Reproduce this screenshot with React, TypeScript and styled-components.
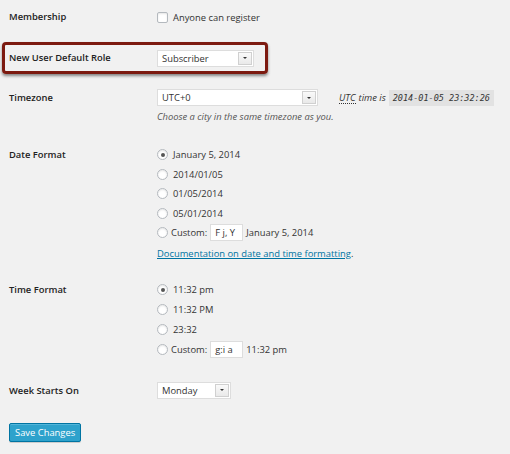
import React from 'react';
import styled, { createGlobalStyle } from 'styled-components';

const GlobalStyle = createGlobalStyle`
  html, body {
    margin: 0;
    padding: 0;
    background: #f1f1f1;
  }
  body {
    font-family: "Open Sans", "Liberation Sans", sans-serif;
    font-size: 9.4px;
    color: #222;
  }
`;

const Page = styled.div`
  width: 510px;
  height: 454px;
  overflow: hidden;
  padding-top: 10px;
  box-sizing: border-box;
`;

const Row = styled.div<{ $top?: number }>`
  display: flex;
  align-items: flex-start;
  margin-top: ${(p) => p.$top ?? 0}px;
  padding-left: 9px;
`;

const Highlight = styled.div<{ $top?: number }>`
  display: flex;
  align-items: center;
  margin-top: ${(p) => p.$top ?? 0}px;
  margin-left: 2px;
  width: 266px;
  height: 32px;
  box-sizing: border-box;
  padding-left: 4px;
  border: 3px solid #7c1a10;
  border-radius: 4px;
  box-shadow: 0 2px 3px rgba(0, 0, 0, 0.45);
`;

const Label = styled.div<{ $lh?: number }>`
  width: 148px;
  flex-shrink: 0;
  font-weight: 600;
  color: #222;
  line-height: ${(p) => p.$lh ?? 14}px;
`;

const Field = styled.div`
  display: flex;
  flex-direction: column;
  color: #333;
`;

const Line = styled.div<{ $h?: number; $gap?: number }>`
  display: flex;
  align-items: center;
  height: ${(p) => p.$h ?? 14}px;
  gap: ${(p) => p.$gap ?? 5}px;
  white-space: nowrap;
`;

const Checkbox = styled.span`
  width: 9px;
  height: 9px;
  border: 1px solid #b4b9be;
  border-radius: 2px;
  background: #fff;
  box-shadow: inset 0 1px 2px rgba(0, 0, 0, 0.1);
`;

const Radio = styled.span<{ $checked?: boolean }>`
  position: relative;
  width: 9px;
  height: 9px;
  border: 1px solid #b4b9be;
  border-radius: 50%;
  background: #fff;
  box-shadow: inset 0 1px 2px rgba(0, 0, 0, 0.1);
  flex-shrink: 0;

  &::after {
    content: '';
    display: ${(p) => (p.$checked ? 'block' : 'none')};
    position: absolute;
    left: 2.5px;
    top: 2.5px;
    width: 4px;
    height: 4px;
    border-radius: 50%;
    background: #555;
  }
`;

const Select = styled.div<{ $w: number }>`
  display: flex;
  align-items: center;
  justify-content: space-between;
  width: ${(p) => p.$w}px;
  height: 17px;
  box-sizing: border-box;
  background: #fff;
  border: 1px solid #ddd;
  padding: 0 1px 0 4px;
  color: #333;
`;

const Arrow = styled.span`
  width: 14px;
  height: 13px;
  box-sizing: border-box;
  border: 1px solid #d0d0d0;
  background: linear-gradient(#fafafa, #e9e9e9);
  display: flex;
  align-items: center;
  justify-content: center;

  &::after {
    content: '';
    border-left: 2px solid transparent;
    border-right: 2px solid transparent;
    border-top: 2px solid #333;
  }
`;

const TextInput = styled.span<{ $w: number }>`
  display: inline-flex;
  align-items: center;
  width: ${(p) => p.$w}px;
  height: 17px;
  box-sizing: border-box;
  padding-left: 4px;
  background: #fff;
  border: 1px solid #ddd;
  color: #333;
`;

const Help = styled.div`
  font-style: italic;
  color: #555;
  line-height: 14px;
  margin-top: 4px;
`;

const TimeInfo = styled.span`
  display: inline-flex;
  align-items: center;
  gap: 3px;
  margin-left: 21px;
  font-style: italic;
  color: #333;
`;

const Abbr = styled.span`
  border-bottom: 1px dotted #333;
  line-height: 11px;
`;

const Code = styled.code`
  font-family: "DejaVu Sans Mono", "Liberation Mono", monospace;
  font-style: italic;
  font-size: 8.5px;
  background: #e2e2e2;
  color: #333;
  padding: 2px 4px;
  line-height: 12px;
`;

const DocLine = styled.div`
  line-height: 14px;
  margin-top: 4px;
  white-space: nowrap;
`;

const DocLink = styled.a`
  color: #0074a2;
  text-decoration: underline;
`;

const SaveButton = styled.button<{ $top?: number }>`
  margin: ${(p) => p.$top ?? 0}px 0 0 9px;
  height: 19px;
  padding: 0 5px;
  font-family: "Open Sans", "Liberation Sans", sans-serif;
  font-size: 9.4px;
  color: #fff;
  background: #2ea2cc;
  border: 1px solid #0074a2;
  border-radius: 2px;
  box-shadow: inset 0 1px 0 rgba(120, 200, 230, 0.5), 0 1px 0 rgba(0, 0, 0, 0.15);
`;

const dateOptions = ['January 5, 2014', '2014/01/05', '01/05/2014', '05/01/2014'];
const timeOptions = ['11:32 pm', '11:32 PM', '23:32'];

const App: React.FC = () => {
  return (
    <>
      <GlobalStyle />
      <Page>
        <Row>
          <Label>Membership</Label>
          <Field>
            <Line>
              <Checkbox />
              Anyone can register
            </Line>
          </Field>
        </Row>

        <Highlight $top={18}>
          <Label>New User Default Role</Label>
          <Select $w={97}>
            Subscriber
            <Arrow />
          </Select>
        </Highlight>

        <Row $top={15}>
          <Label $lh={17}>Timezone</Label>
          <Field>
            <Line $h={17} $gap={0}>
              <Select $w={161}>
                UTC+0
                <Arrow />
              </Select>
              <TimeInfo>
                <Abbr>UTC</Abbr> time is <Code>2014-01-05 23:32:26</Code>
              </TimeInfo>
            </Line>
            <Help>Choose a city in the same timezone as you.</Help>
          </Field>
        </Row>

        <Row $top={21}>
          <Label $lh={19.5}>Date Format</Label>
          <Field>
            {dateOptions.map((d, i) => (
              <Line key={d} $h={19.5}>
                <Radio $checked={i === 0} />
                {d}
              </Line>
            ))}
            <Line $h={19.5} $gap={3}>
              <Radio />
              Custom: <TextInput $w={33}>F j, Y</TextInput> January 5, 2014
            </Line>
            <DocLine>
              <DocLink href="#">Documentation on date and time formatting</DocLink>.
            </DocLine>
          </Field>
        </Row>

        <Row $top={19}>
          <Label $lh={20}>Time Format</Label>
          <Field>
            {timeOptions.map((t, i) => (
              <Line key={t} $h={20}>
                <Radio $checked={i === 0} />
                {t}
              </Line>
            ))}
            <Line $h={20} $gap={3}>
              <Radio />
              Custom: <TextInput $w={33}>g:i a</TextInput> 11:32 pm
            </Line>
          </Field>
        </Row>

        <Row $top={22}>
          <Label $lh={17}>Week Starts On</Label>
          <Field>
            <Select $w={74}>
              Monday
              <Arrow />
            </Select>
          </Field>
        </Row>

        <SaveButton $top={24}>Save Changes</SaveButton>
      </Page>
    </>
  );
};

export default App;
